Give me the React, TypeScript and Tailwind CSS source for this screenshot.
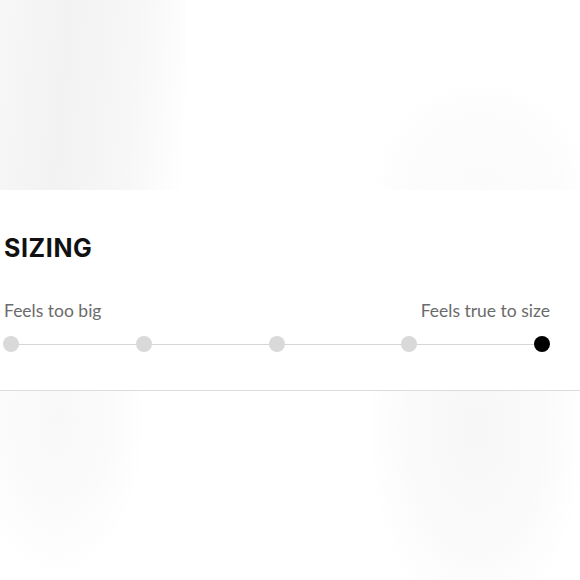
import React from "react";

const steps = [0, 1, 2, 3, 4];
const selected = 4;

export default function App() {
  return (
    <div className="w-[580px] h-[580px] bg-white overflow-hidden font-['Lato','Liberation_Sans',sans-serif]">
      {/* product images (faint) */}
      <div className="flex h-[190px]">
        <div className="w-[185px] h-full bg-[linear-gradient(95deg,#f7f7f7_0%,#f2f2f2_35%,#f7f7f7_70%,#ffffff_100%)]" />
        <div className="flex-1 h-full bg-[radial-gradient(ellipse_110px_110px_at_75%_100%,#fbfbfb_0%,#fcfcfc_70%,#ffffff_100%)]" />
      </div>

      {/* sizing */}
      <div className="pl-[3px] pr-[30px] pt-[43px] h-[200px]">
        <h2 className="text-[25px] leading-[30px] font-bold tracking-[0.6px] text-[#111] font-['Inter','Liberation_Sans',sans-serif] pl-[1px]">
          SIZING
        </h2>
        <div className="flex justify-between mt-[38px] text-[17.5px] leading-[20px] text-[#6b6b6b] pl-[1px]">
          <span>Feels too big</span>
          <span>Feels true to size</span>
        </div>
        <div className="relative mt-[15px] h-4 flex items-center justify-between">
          <div className="absolute left-2 right-2 top-1/2 h-px bg-[#d6d6d6]" />
          {steps.map((s) => (
            <div
              key={s}
              className={`relative w-4 h-4 rounded-full ${s === selected ? "bg-black" : "bg-[#d9d9d9]"}`}
            />
          ))}
        </div>
      </div>

      <div className="border-t border-[#dcdcdc] flex h-[190px]">
        <div className="w-[190px] h-full bg-[radial-gradient(ellipse_90px_160px_at_30%_15%,#f8f8f8_0%,#fbfbfb_60%,#ffffff_100%)]" />
        <div className="flex-1" />
        <div className="w-[230px] h-full bg-[radial-gradient(ellipse_110px_200px_at_55%_20%,#f7f7f7_0%,#fafafa_60%,#ffffff_100%)]" />
      </div>
    </div>
  );
}
